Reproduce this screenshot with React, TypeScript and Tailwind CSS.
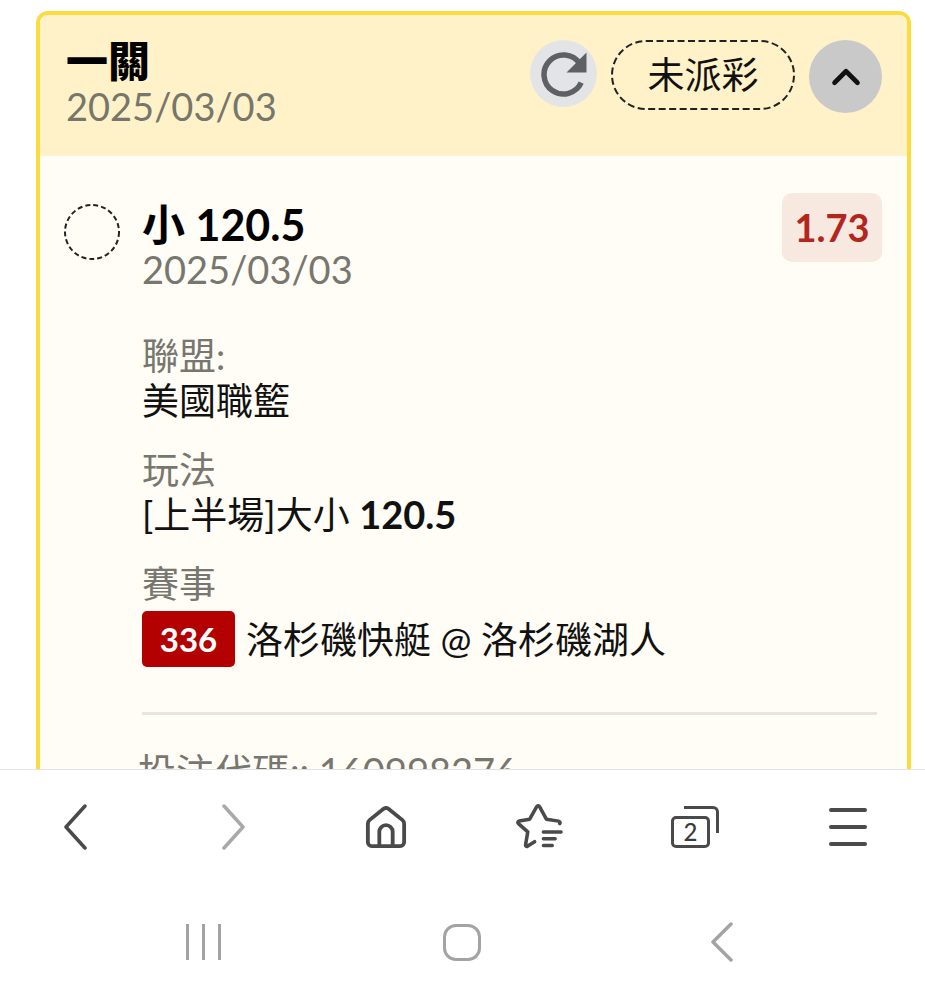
import { ChevronUp } from 'lucide-react'

const font = "font-['Lato','Noto_Sans_CJK_TC',sans-serif]"

function Field({ label, children }: { label: string; children: React.ReactNode }) {
  return (
    <div className="flex flex-col">
      <p className="text-[37px] leading-[45px] text-[#77766f]">{label}</p>
      <div className="text-[37px] leading-[45px] text-[#111]">{children}</div>
    </div>
  )
}

function ReloadIcon() {
  return (
    <svg width="46" height="46" viewBox="0 0 46 46" fill="none">
      <path d="M38.500 12.300A19.500 19.500 0 1 0 40.200 31.700" stroke="#5f6063" strokeWidth="5.500" />
      <path d="M45.500 1.500V21.500H25.500Z" fill="#5f6063" />
    </svg>
  )
}

function NavIcons() {
  const stroke = '#4a4a4a'
  return (
    <div className="flex items-center h-[114px] pl-[63px]">
      <svg width="24" height="46" viewBox="0 0 24 46" fill="none">
        <path d="M22 2 3 23l19 21" stroke={stroke} strokeWidth="3.500" strokeLinecap="round" strokeLinejoin="round" />
      </svg>
      <svg width="24" height="46" viewBox="0 0 24 46" fill="none" className="ml-[135px]">
        <path d="m2 2 19 21L2 44" stroke="#a9a9a9" strokeWidth="3.500" strokeLinecap="round" strokeLinejoin="round" />
      </svg>
      <svg width="42" height="42" viewBox="0 0 44 44" fill="none" className="ml-[119px]">
        <path d="M3 38V18.500c0-1.500.6-2.700 1.700-3.700L19.500 3a4 4 0 0 1 5 0l14.800 11.800c1.100 1 1.700 2.200 1.700 3.700V38a4 4 0 0 1-4 4H7a4 4 0 0 1-4-4Z" stroke={stroke} strokeWidth="4" />
        <path d="M15 41V27a7 7 0 0 1 14 0v14" stroke={stroke} strokeWidth="4" />
      </svg>
      <svg width="47" height="48" viewBox="0 0 48 48" fill="none" className="ml-[109px]">
        <path d="M19 39l-7 4.500c-1.500.8-2.500-.2-2.200-1.500L12 29 2.500 20.500c-1-1-.5-2.500.8-2.700L14 16 21 3.500c.8-1.500 2.500-1.500 3.200 0L31 16l12.500 2c1.300.2 1.800 1.500 1.200 2.500" stroke={stroke} strokeWidth="3.600" strokeLinecap="round" strokeLinejoin="round" />
        <path d="M28 29h18M28 36h12M28 43h9" stroke={stroke} strokeWidth="3.600" strokeLinecap="round" />
      </svg>
      <div className="relative ml-[108px] w-[48px] h-[42px]">
        <div className={`${font} absolute left-0 bottom-0 w-[39px] h-[32px] rounded-[5px] border-[3px] border-[#4a4a4a] flex items-center justify-center text-[24px] font-medium leading-none text-[#3c3c3c]`}>
          2
        </div>
        <div className="absolute right-0 top-0 w-[35px] h-[27px] rounded-tr-[6px] border-t-[3px] border-r-[3px] border-[#4a4a4a]" />
      </div>
      <div className="ml-[110px] flex flex-col gap-[13px]">
        <div className="w-[38px] h-[4px] rounded-full bg-[#4a4a4a]" />
        <div className="w-[38px] h-[4px] rounded-full bg-[#4a4a4a]" />
        <div className="w-[38px] h-[4px] rounded-full bg-[#4a4a4a]" />
      </div>
    </div>
  )
}

function SystemNav() {
  return (
    <div className="flex items-center h-[116px] pl-[186px]">
      <div className="flex gap-[13px]">
        <div className="w-[3px] h-[36px] bg-[#a3a3a3]" />
        <div className="w-[3px] h-[36px] bg-[#a3a3a3]" />
        <div className="w-[3px] h-[36px] bg-[#a3a3a3]" />
      </div>
      <div className="ml-[222px] w-[38px] h-[37px] rounded-[13px] border-[3.5px] border-[#a3a3a3]" />
      <svg width="24" height="40" viewBox="0 0 24 40" fill="none" className="ml-[229px]">
        <path d="M21 2 3 20l18 18" stroke="#a3a3a3" strokeWidth="3.500" strokeLinecap="round" strokeLinejoin="round" />
      </svg>
    </div>
  )
}

export default function App() {
  return (
    <div className={`${font} w-[925px] h-[1000px] bg-white flex flex-col overflow-hidden`}>
      <div className="h-[769px] shrink-0 overflow-hidden pt-[11px] pl-[36px] pr-[14px]">
        <div className="border-[4px] border-[#fbdc3e] rounded-[12px] overflow-hidden bg-[#fffdf5]">
          {/* header */}
          <div className="bg-[#fff2c8] h-[141px] pl-[26px] pr-[25px] pt-[23px] flex justify-between items-start">
            <div>
              <h1 className="font-black text-[42px] leading-[46px] text-black">一關</h1>
              <p className="text-[38px] leading-[45px] text-[#77766a]">2025/03/03</p>
            </div>
            <div className="flex items-start gap-[14px] mt-[2px]">
              <button className="w-[67px] h-[67px] rounded-full bg-[#e3e4e6] flex items-center justify-center">
                <ReloadIcon />
              </button>
              <span className="relative w-[184px] h-[70px] flex items-center justify-center text-[37px] text-[#111]">
                <svg width="184" height="70" viewBox="0 0 184 70" fill="none" className="absolute inset-0">
                  <rect x="1" y="1" width="182" height="68" rx="34" stroke="#222" strokeWidth="2" strokeDasharray="7 3.500" />
                </svg>
                未派彩
              </span>
              <button className="w-[73px] h-[73px] rounded-full bg-[#c9c9c9] flex items-center justify-center">
                <ChevronUp size={46} strokeWidth={2.4} color="#111" />
              </button>
            </div>
          </div>

          {/* body */}
          <div className="pl-[24px] pr-[30px] pt-[37px] pb-[100px] flex gap-[22px]">
            <svg width="56" height="56" viewBox="0 0 56 56" fill="none" className="shrink-0 mt-[11px]">
              <circle cx="28" cy="28" r="27" stroke="#222" strokeWidth="2" strokeDasharray="5 3" />
            </svg>
            <div className="flex-1 min-w-0">
              <div className="flex justify-between items-start">
                <div>
                  <h2 className="font-bold text-[43px] leading-[50px] mt-[7px] text-black">小 120.5</h2>
                  <p className="text-[38px] leading-[39px] text-[#77766f]">2025/03/03</p>
                </div>
                <span className="w-[100px] h-[69px] mr-[-5px] rounded-[10px] bg-[#f7e8e0] flex items-center justify-center font-bold text-[38px] text-[#b3261e]">
                  1.73
                </span>
              </div>
              <div className="mt-[44px] flex flex-col gap-[24px]">
                <Field label="聯盟:">美國職籃</Field>
                <Field label="玩法">
                  [上半場]大小 <span className="font-bold text-[38px]">120.5</span>
                </Field>
                <Field label="賽事">
                  <div className="flex items-center gap-[11px] h-[56px] mt-[5px]">
                    <span className="w-[93px] h-[56px] rounded-[5px] bg-[#b30000] flex items-center justify-center font-bold text-[33px] text-white">
                      336
                    </span>
                    <span>洛杉磯快艇 @ 洛杉磯湖人</span>
                  </div>
                </Field>
              </div>
              <div className="mt-[45px] h-[3px] bg-[#e8e5dd]" />
              <p className="mt-[34px] ml-[-4px] text-[38px] leading-[45px] text-[#77766f] whitespace-nowrap">投注代碼:: 160998276</p>
            </div>
          </div>
        </div>
      </div>

      <div className="flex-1 border-t border-[#e2e2e2] bg-white">
        <NavIcons />
        <SystemNav />
      </div>
    </div>
  )
}
